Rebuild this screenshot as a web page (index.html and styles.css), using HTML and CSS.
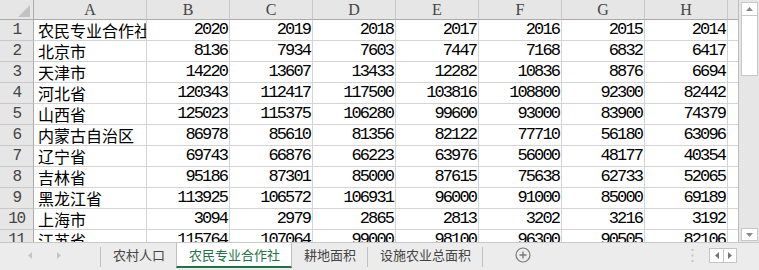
FILE: index.html
```html
<!DOCTYPE html>
<html lang="zh-CN">
<head>
    <meta charset="UTF-8">
    <title>农民专业合作社</title>
    <link rel="stylesheet" href="styles.css">
</head>
<body>
    <div class="window">
        <div class="main">
            <div class="sheet">
                <div class="r hdr">
                    <div class="corner">
                        <svg width="33" height="19" viewBox="0 0 33 19"><polygon points="30,5 30,17 18,17" fill="#c2c2c2"/></svg>
                    </div>
                    <div>A</div><div>B</div><div>C</div><div>D</div><div>E</div><div>F</div><div>G</div><div>H</div><div></div>
                </div>
                <div class="r"><div class="n">1</div><div class="name">农民专业合作社</div><div class="v">2020</div><div class="v">2019</div><div class="v">2018</div><div class="v">2017</div><div class="v">2016</div><div class="v">2015</div><div class="v">2014</div><div></div></div>
                <div class="r"><div class="n">2</div><div class="name">北京市</div><div class="v">8136</div><div class="v">7934</div><div class="v">7603</div><div class="v">7447</div><div class="v">7168</div><div class="v">6832</div><div class="v">6417</div><div></div></div>
                <div class="r"><div class="n">3</div><div class="name">天津市</div><div class="v">14220</div><div class="v">13607</div><div class="v">13433</div><div class="v">12282</div><div class="v">10836</div><div class="v">8876</div><div class="v">6694</div><div></div></div>
                <div class="r"><div class="n">4</div><div class="name">河北省</div><div class="v">120343</div><div class="v">112417</div><div class="v">117500</div><div class="v">103816</div><div class="v">108800</div><div class="v">92300</div><div class="v">82442</div><div></div></div>
                <div class="r"><div class="n">5</div><div class="name">山西省</div><div class="v">125023</div><div class="v">115375</div><div class="v">106280</div><div class="v">99600</div><div class="v">93000</div><div class="v">83900</div><div class="v">74379</div><div></div></div>
                <div class="r"><div class="n">6</div><div class="name">内蒙古自治区</div><div class="v">86978</div><div class="v">85610</div><div class="v">81356</div><div class="v">82122</div><div class="v">77710</div><div class="v">56180</div><div class="v">63096</div><div></div></div>
                <div class="r"><div class="n">7</div><div class="name">辽宁省</div><div class="v">69743</div><div class="v">66876</div><div class="v">66223</div><div class="v">63976</div><div class="v">56000</div><div class="v">48177</div><div class="v">40354</div><div></div></div>
                <div class="r"><div class="n">8</div><div class="name">吉林省</div><div class="v">95186</div><div class="v">87301</div><div class="v">85000</div><div class="v">87615</div><div class="v">75638</div><div class="v">62733</div><div class="v">52065</div><div></div></div>
                <div class="r"><div class="n">9</div><div class="name">黑龙江省</div><div class="v">113925</div><div class="v">106572</div><div class="v">106931</div><div class="v">96000</div><div class="v">91000</div><div class="v">85000</div><div class="v">69189</div><div></div></div>
                <div class="r"><div class="n">10</div><div class="name">上海市</div><div class="v">3094</div><div class="v">2979</div><div class="v">2865</div><div class="v">2813</div><div class="v">3202</div><div class="v">3216</div><div class="v">3192</div><div></div></div>
                <div class="r"><div class="n">11</div><div class="name">江苏省</div><div class="v">115764</div><div class="v">107064</div><div class="v">99000</div><div class="v">98100</div><div class="v">96300</div><div class="v">90505</div><div class="v">82106</div><div></div></div>
            </div>
            <div class="vscroll">
                <div class="vbtn up">
                    <svg width="7" height="4" viewBox="0 0 7 4"><polygon points="0,4 7,4 3.5,0" fill="#8a8a8a"/></svg>
                </div>
                <div class="thumb"></div>
                <div class="track"></div>
                <div class="vbtn down">
                    <svg width="7" height="4" viewBox="0 0 7 4"><polygon points="0,0 7,0 3.5,4" fill="#8a8a8a"/></svg>
                </div>
            </div>
        </div>
        <div class="tabbar">
            <div class="nav">
                <svg width="4" height="7" viewBox="0 0 4 7"><polygon points="4,0 4,7 0,3.5" fill="#c4c4c4"/></svg>
                <svg width="4" height="7" viewBox="0 0 4 7"><polygon points="0,0 0,7 4,3.5" fill="#c4c4c4"/></svg>
            </div>
            <span class="sep"></span>
            <div class="tab">农村人口</div>
            <div class="tab active">农民专业合作社</div>
            <div class="tab">耕地面积</div>
            <span class="sep"></span>
            <div class="tab">设施农业总面积</div>
            <span class="sep"></span>
            <div class="add">
                <svg width="16" height="16" viewBox="0 0 16 16">
                    <circle cx="8" cy="8" r="7" fill="none" stroke="#7a7a7a" stroke-width="1.2"/>
                    <path d="M8 4.5v7M4.5 8h7" stroke="#7a7a7a" stroke-width="1.4"/>
                </svg>
            </div>
            <div class="dots">
                <svg width="3" height="13" viewBox="0 0 3 13">
                    <rect x="0.5" y="0" width="2" height="2" fill="#c4c4c4"/>
                    <rect x="0.5" y="5.5" width="2" height="2" fill="#c4c4c4"/>
                    <rect x="0.5" y="11" width="2" height="2" fill="#c4c4c4"/>
                </svg>
            </div>
            <div class="hnav">
                <div class="hbtn">
                    <svg width="4" height="7" viewBox="0 0 4 7"><polygon points="4,0 4,7 0,3.5" fill="#777"/></svg>
                </div>
                <div class="hbtn">
                    <svg width="4" height="7" viewBox="0 0 4 7"><polygon points="0,0 0,7 4,3.5" fill="#777"/></svg>
                </div>
            </div>
        </div>
    </div>
</body>
</html>
```

FILE: styles.css
```css
* {
    margin: 0;
    padding: 0;
    box-sizing: border-box;
}

body {
    width: 759px;
    height: 270px;
    overflow: hidden;
    background: #e6e6e6;
    font-family: "Noto Sans CJK SC", sans-serif;
}

.window {
    display: flex;
    flex-direction: column;
    height: 270px;
}

/* sheet area */

.main {
    display: flex;
    height: 242px;
    background: #e6e6e6;
}

.sheet {
    width: 739px;
    height: 242px;
    border-right: 1px solid #bcbcbc;
    overflow: hidden;
    background: #fff;
}

.r {
    display: grid;
    grid-template-columns: 34px 113px repeat(7, 83px) 10px;
    height: 21px;
}

.r > div {
    border-right: 1px solid #d4d4d4;
    border-bottom: 1px solid #d4d4d4;
    overflow: hidden;
    white-space: nowrap;
    line-height: 20px;
}

.r > div:last-child {
    border-right: none;
}

.hdr {
    height: 20px;
    background: #e6e6e6;
}

.hdr > div {
    border-right-color: #c8c8c8;
    border-bottom-color: #ababab;
    text-align: center;
    font-family: "Liberation Serif", serif;
    font-size: 16px;
    line-height: 20px;
    color: #444;
}

.hdr > .corner {
    border-right-color: #ababab;
}

.corner svg {
    display: block;
}

.r > .n {
    background: #e6e6e6;
    border-right-color: #ababab;
    border-bottom-color: #c8c8c8;
    text-align: center;
    font-family: "Liberation Mono", monospace;
    font-size: 16px;
    letter-spacing: -1.4px;
    color: #444;
}

.name {
    padding-left: 4px;
    font-size: 16px;
    color: #000;
}

.v {
    text-align: right;
    padding-right: 2px;
    font-family: "Liberation Mono", monospace;
    font-size: 17px;
    letter-spacing: -1.9px;
    color: #000;
}

/* vertical scrollbar */

.vscroll {
    width: 17px;
    margin: 2px 1px 1px 2px;
    display: flex;
    flex-direction: column;
}

.vbtn {
    height: 14px;
    border: 1px solid #c8c8c8;
    background: #fff;
    display: flex;
    align-items: center;
    justify-content: center;
}

.vbtn.down {
    height: 13px;
}

.thumb {
    height: 60px;
    border: 1px solid #c8c8c8;
    border-top: none;
    background: #fff;
}

.track {
    flex: 1;
}

/* sheet tabs */

.tabbar {
    display: flex;
    height: 28px;
    background: #ececec;
    border-top: 1px solid #c8c8c8;
}

.nav {
    width: 100px;
    display: flex;
    align-items: center;
    gap: 25px;
    padding-left: 28px;
    padding-bottom: 3px;
}

.sep {
    width: 1px;
    background: #c0c0c0;
    margin: 4px 0 3px;
}

.tab {
    display: flex;
    align-items: center;
    padding: 0 11px 0 12px;
    margin-bottom: 2px;
    border-bottom: 2px solid transparent;
    font-size: 13px;
    color: #444;
}

.tab.active {
    background: #fff;
    color: #217346;
    border-left: 1px solid #c0c0c0;
    border-right: 1px solid #c0c0c0;
    border-bottom-color: #217346;
}

.add {
    display: flex;
    align-items: center;
    margin-left: 32px;
    padding-bottom: 3px;
}

.dots {
    display: flex;
    align-items: center;
    margin-left: auto;
    padding-bottom: 3px;
}

.hnav {
    display: flex;
    align-self: center;
    height: 15px;
    margin: 0 22px 3px 15px;
    border: 1px solid #c4c4c4;
    background: #fff;
}

.hbtn {
    width: 13px;
    display: flex;
    align-items: center;
    justify-content: center;
}

.hbtn + .hbtn {
    border-left: 1px solid #c4c4c4;
}
```
